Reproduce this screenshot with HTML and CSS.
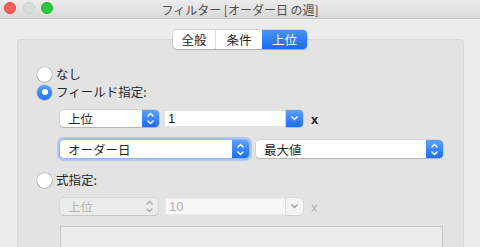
FILE: index.html
```html
<!DOCTYPE html>
<html lang="ja">
<head>
<meta charset="utf-8">
<link rel="stylesheet" href="styles.css">
</head>
<body>
<div class="window">
  <div class="titlebar">
    <div class="lights">
      <span class="light red"></span>
      <span class="light gray"></span>
      <span class="light green"></span>
    </div>
    <div class="title">フィルター [オーダー日 の週]</div>
  </div>
  <div class="content">
    <div class="tabs">
      <div class="tab t1">全般</div>
      <div class="tab t2">条件</div>
      <div class="tab t3 active">上位</div>
    </div>
    <div class="panel">
      <div class="radio-line">
        <span class="radio"></span><span class="label">なし</span>
      </div>
      <div class="radio-line">
        <span class="radio checked"></span><span class="label">フィールド指定:</span>
      </div>
      <div class="row r1">
        <div class="popup w99"><span class="ptext">上位</span><span class="arrow blue"><svg width="9" height="13" viewBox="0 0 9 13"><path d="M1.5 4.5 L4.5 1.5 L7.5 4.5 M1.5 8.5 L4.5 11.5 L7.5 8.5" fill="none" stroke="#fff" stroke-width="1.4"/></svg></span></div>
        <div class="combo"><span class="ftext">1</span><span class="arrow blue"><svg width="9" height="7" viewBox="0 0 9 7"><path d="M1.5 1.5 L4.5 4.5 L7.5 1.5" fill="none" stroke="#fff" stroke-width="1.4"/></svg></span></div>
        <span class="x">x</span>
      </div>
      <div class="row r2">
        <div class="popup w189 focus"><span class="ptext">オーダー日</span><span class="arrow blue"><svg width="9" height="13" viewBox="0 0 9 13"><path d="M1.5 4.5 L4.5 1.5 L7.5 4.5 M1.5 8.5 L4.5 11.5 L7.5 8.5" fill="none" stroke="#fff" stroke-width="1.4"/></svg></span></div>
        <div class="popup w187"><span class="ptext">最大値</span><span class="arrow blue"><svg width="9" height="13" viewBox="0 0 9 13"><path d="M1.5 4.5 L4.5 1.5 L7.5 4.5 M1.5 8.5 L4.5 11.5 L7.5 8.5" fill="none" stroke="#fff" stroke-width="1.4"/></svg></span></div>
      </div>
      <div class="radio-line r3">
        <span class="radio"></span><span class="label">式指定:</span>
      </div>
      <div class="row r4 disabled">
        <div class="popup w98"><span class="ptext">上位</span><span class="arrow plain"><svg width="9" height="13" viewBox="0 0 9 13"><path d="M1.5 4.5 L4.5 1.5 L7.5 4.5 M1.5 8.5 L4.5 11.5 L7.5 8.5" fill="none" stroke="#a8a8a8" stroke-width="1.3"/></svg></span></div>
        <div class="combo"><span class="ftext">10</span><span class="arrow dis"><svg width="9" height="7" viewBox="0 0 9 7"><path d="M1.5 1.5 L4.5 4.5 L7.5 1.5" fill="none" stroke="#9a9a9a" stroke-width="1.3"/></svg></span></div>
        <span class="x">x</span>
      </div>
      <div class="textarea"></div>
    </div>
  </div>
</div>
</body>
</html>
```
FILE: styles.css
```css
* { box-sizing: border-box; }
html, body {
  margin: 0;
  padding: 0;
}
body {
  width: 480px;
  height: 247px;
  overflow: hidden;
  background: #ececec;
  font-family: "Noto Sans CJK JP", "Noto Sans", sans-serif;
  font-size: 12px;
  color: #262626;
}
.window {
  width: 480px;
  height: 247px;
  overflow: hidden;
}
.titlebar {
  height: 19px;
  background: linear-gradient(#ececec, #d9d9d9);
  border-bottom: 1px solid #c6c6c6;
  display: flex;
  align-items: center;
}
.lights {
  display: flex;
  gap: 6.5px;
  padding-left: 4px;
  margin-top: -2px;
  width: 53px;
  flex: none;
}
.light {
  width: 12px;
  height: 12px;
  border-radius: 50%;
  display: block;
  flex: none;
}
.red { background: #fc5f57; border: 0.5px solid #e2463f; }
.gray { background: #dcdcdc; border: 0.5px solid #cfcfcf; }
.green { background: #29c840; border: 0.5px solid #1dad2b; }
.title {
  flex: 1;
  text-align: center;
  color: #4d4d4d;
  font-size: 12px;
  line-height: 18px;
  height: 18px;
  margin-top: 2px;
  padding-right: 53px;
  white-space: nowrap;
}
.content {
  padding-top: 11px;
}
.tabs {
  display: flex;
  width: 134px;
  height: 19px;
  margin: 0 auto -10px;
  position: relative;
  z-index: 1;
  background: #fff;
  border-radius: 4px;
  box-shadow: 0 0 0 0.5px rgba(0,0,0,0.18), 0 1px 1px rgba(0,0,0,0.18);
}
.tab {
  display: flex;
  align-items: center;
  justify-content: center;
  font-size: 12.5px;
  color: #262626;
  height: 19px;
}
.t1 { width: 43px; border-right: 1px solid #dcdcdc; }
.t2 { width: 46px; }
.t3 { width: 45px; }
.tab.active {
  background: linear-gradient(#4a93f8, #166cf2);
  color: #fff;
  border-radius: 0 4px 4px 0;
}
.panel {
  margin-left: 17px;
  width: 447px;
  height: 230px;
  background: #e3e3e3;
  border: 1px solid #d8d8d8;
  border-radius: 4px;
  padding: 25px 0 0 19px;
}
.radio-line {
  display: flex;
  align-items: center;
  height: 18px;
}
.radio {
  width: 15px;
  height: 15px;
  border-radius: 50%;
  background: #fff;
  box-shadow: 0 0 0 0.5px rgba(0,0,0,0.25), 0 0.5px 1px rgba(0,0,0,0.2);
  display: flex;
  align-items: center;
  justify-content: center;
  flex: none;
}
.radio.checked {
  background: linear-gradient(#5aa0f9, #1f73f4);
  box-shadow: 0 0 0 0.5px rgba(0,60,160,0.35);
}
.radio.checked::after {
  content: "";
  width: 6px;
  height: 6px;
  border-radius: 50%;
  background: #fff;
}
.label {
  margin-left: 4px;
  font-size: 12.5px;
  line-height: 18px;
  color: #262626;
}
.row {
  display: flex;
  align-items: center;
  margin-left: 23px;
}
.r1 { margin-top: 9px; height: 17px; }
.r2 { margin-top: 13px; height: 18px; gap: 7px; }
.r3 { margin-top: 13px; }
.r4 { margin-top: 9px; height: 17px; }
.textarea {
  margin: 11px 0 0 23px;
  width: 383px;
  height: 40px;
  background: #ebebeb;
  border: 1px solid #c8c8c8;
}
.popup {
  display: flex;
  align-items: stretch;
  height: 100%;
  background: #fff;
  border-radius: 4px;
  box-shadow: 0 0 0 0.5px rgba(0,0,0,0.15), 0 1px 1px rgba(0,0,0,0.15);
  flex: none;
}
.w99 { width: 99px; }
.w98 { width: 98px; }
.w189 { width: 189px; }
.w187 { width: 187px; }
.popup.focus {
  box-shadow: 0 0 0 1px #8cb6f2, 0 0 0 3px rgba(110,160,240,0.45);
}
.ptext {
  flex: 1;
  padding-left: 8px;
  font-size: 12.5px;
  line-height: 17px;
  display: flex;
  align-items: center;
  color: #262626;
}
.arrow {
  width: 17px;
  display: flex;
  align-items: center;
  justify-content: center;
  border-radius: 0 4px 4px 0;
  flex: none;
}
.arrow.blue {
  background: linear-gradient(#5ea2f9, #1a6ef3);
}
.combo {
  display: flex;
  align-items: stretch;
  height: 100%;
  width: 139px;
  margin-left: 5px;
  flex: none;
}
.ftext {
  flex: 1;
  background: #fff;
  box-shadow: inset 0 0 0 0.5px rgba(0,0,0,0.22);
  font-family: "Liberation Sans", "Noto Sans CJK JP", sans-serif;
  font-size: 13px;
  padding-left: 4px;
  display: flex;
  align-items: center;
  color: #1a1a1a;
}
.combo .arrow {
  box-shadow: 0 0 0 0.5px rgba(0,0,0,0.12), 0 1px 1px rgba(0,0,0,0.12);
}
.x {
  margin-left: 8px;
  font-family: "Liberation Sans", sans-serif;
  font-weight: bold;
  font-size: 13px;
  color: #222;
  line-height: 17px;
  margin-top: 2px;
}
.disabled .popup {
  background: #ececec;
  box-shadow: 0 0 0 0.5px rgba(0,0,0,0.1), 0 1px 1px rgba(0,0,0,0.08);
}
.disabled .ptext { color: #b4b4b4; }
.disabled .ftext { color: #b0b0b0; background: #f7f7f7; box-shadow: inset 0 0 0 0.5px rgba(0,0,0,0.1); }
.disabled .arrow.dis {
  background: #f3f3f3;
  box-shadow: 0 0 0 0.5px rgba(0,0,0,0.08), 0 1px 1px rgba(0,0,0,0.06);
}
.disabled .combo { width: 138px; margin-left: 7px; }
.disabled .x { color: #b4b4b4; font-weight: normal; }
```
